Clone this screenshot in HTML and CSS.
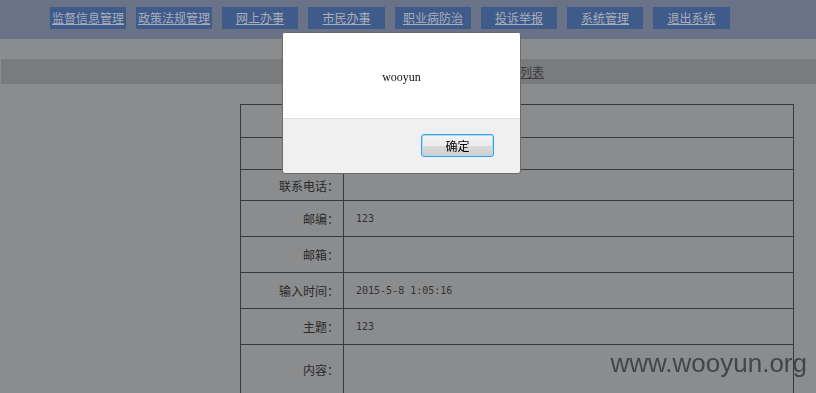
FILE: index.html
```html
<!DOCTYPE html>
<html lang="zh-CN">
<head>
    <meta charset="UTF-8">
    <title>投诉举报详细信息</title>
    <link rel="stylesheet" href="styles.css">
</head>
<body>

    <div class="nav">
        <a href="#">监督信息管理</a>
        <a href="#">政策法规管理</a>
        <a href="#">网上办事</a>
        <a href="#" class="wide">市民办事</a>
        <a href="#">职业病防治</a>
        <a href="#">投诉举报</a>
        <a href="#">系统管理</a>
        <a href="#" class="wide">退出系统</a>
    </div>

    <div class="titlebar">
        <a href="#">投诉举报信息列表</a>
    </div>

    <table class="detail">
        <tr class="r33"><td class="label">姓名：</td><td class="value"></td></tr>
        <tr class="r32"><td class="label">单位：</td><td class="value"></td></tr>
        <tr class="r31"><td class="label">联系电话：</td><td class="value"></td></tr>
        <tr><td class="label">邮编：</td><td class="value">123</td></tr>
        <tr><td class="label">邮箱：</td><td class="value"></td></tr>
        <tr><td class="label">输入时间：</td><td class="value">2015-5-8 1:05:16</td></tr>
        <tr><td class="label">主题：</td><td class="value">123</td></tr>
        <tr class="r48"><td class="label">内容：</td><td class="value"></td></tr>
    </table>

    <div class="alert">
        <div class="alert-body">wooyun</div>
        <div class="alert-foot">
            <button>确定</button>
        </div>
    </div>

    <div class="watermark">www.wooyun.org</div>

</body>
</html>
```

FILE: styles.css
```css
body {
    margin: 0;
    background-color: #8b8c8e;
    font-family: "Noto Sans CJK SC", sans-serif;
    font-size: 12px;
    color: #2a2a2a;
    height: 393px;
    overflow: hidden;
}
.nav {
    height: 39px;
    box-sizing: border-box;
    background-color: #6a7287;
    display: flex;
    gap: 10px;
    padding: 7px 0 0 50px;
}
.nav a {
    width: 76px;
    height: 22px;
    line-height: 22px;
    background-color: #3f5b8a;
    color: #a9aeba;
    text-align: center;
    font-size: 12px;
}
.nav a.wide {
    width: 77px;
}
.titlebar {
    margin: 20px 0 20px 1px;
    height: 25px;
    line-height: 25px;
    background-color: #7a7b7d;
    padding-left: 447px;
}
.titlebar a {
    color: #3c3c3c;
    font-size: 12px;
}
.detail {
    margin-left: 240px;
    width: 554px;
    border-collapse: collapse;
}
.detail td {
    border: 1px solid #38393b;
    height: 35px;
    padding: 0;
}
.detail .r33 td { height: 32px; }
.detail .r32 td { height: 31px; }
.detail .r31 td { height: 30px; }
.detail .r48 td { height: 48px; }
.label {
    width: 98px;
    text-align: right;
    padding-right: 4px !important;
    font-size: 12px;
}
.value {
    padding-left: 12px !important;
    font-family: "DejaVu Sans Mono", monospace;
    font-size: 10px;
    color: #333;
}
.alert {
    position: fixed;
    left: 282px;
    top: 32px;
    width: 237px;
    height: 140px;
    border: 1px solid #6b6b6b;
    border-radius: 3px;
    background: #f0f0f0;
    overflow: hidden;
}
.alert-body {
    height: 85px;
    background: white;
    border-bottom: 1px solid #dfdfdf;
    text-align: center;
    line-height: 88px;
    font-family: "Liberation Serif", serif;
    font-size: 12px;
    color: #111;
}
.alert-foot {
    display: flex;
    justify-content: flex-end;
    padding: 15px 26px 0 0;
}
.alert-foot button {
    width: 73px;
    height: 23px;
    border: 1px solid #3aa0e4;
    border-radius: 3px;
    box-shadow: inset 0 0 0 1px #a8ddf7;
    background: linear-gradient(#f4f4f4, #ebebeb 50%, #dadada 51%, #cfcfcf);
    font-family: "Noto Sans CJK SC", sans-serif;
    font-size: 12px;
    color: #000;
    padding: 0;
}
.watermark {
    position: fixed;
    right: 9px;
    top: 350px;
    font-family: "Liberation Sans", sans-serif;
    font-size: 26px;
    line-height: 26px;
    color: #444547;
}
```
